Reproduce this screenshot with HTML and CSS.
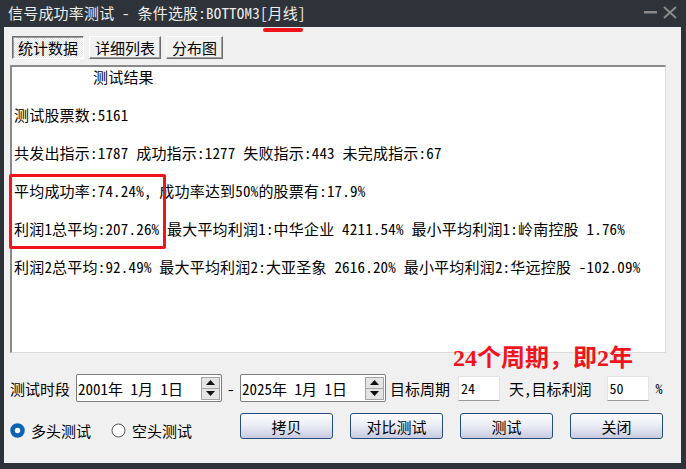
FILE: index.html
```html
<!DOCTYPE html>
<html lang="zh-CN">
<head>
    <meta charset="UTF-8">
    <title>信号成功率测试</title>
    <link rel="stylesheet" href="styles.css">
</head>
<body>
    <div class="window">
        <div class="titlebar">
            <span class="title">信号成功率测试 - 条件选股:BOTTOM3[月线]</span>
            <div class="controls">
                <svg width="33" height="14" viewBox="0 0 33 14">
                    <rect x="0" y="5" width="13" height="2.5" fill="#8a8a8a"/>
                    <path d="M20 1 L32 12 M32 1 L20 12" stroke="#8a8a8a" stroke-width="2"/>
                </svg>
            </div>
        </div>

        <div class="body">
            <span class="title-mark"></span>

            <div class="tabs">
                <div class="tab active">统计数据</div>
                <div class="tab">详细列表</div>
                <div class="tab">分布图</div>
            </div>

            <div class="result">
                <div class="line heading">测试结果</div>
                <div class="line">测试股票数:5161</div>
                <div class="line">共发出指示:1787 成功指示:1277 失败指示:443 未完成指示:67</div>
                <div class="line">平均成功率:74.24%, 成功率达到50%的股票有:17.9%</div>
                <div class="line">利润1总平均:207.26% 最大平均利润1:中华企业 4211.54% 最小平均利润1:岭南控股 1.76%</div>
                <div class="line">利润2总平均:92.49% 最大平均利润2:大亚圣象 2616.20% 最小平均利润2:华远控股 -102.09%</div>
                <span class="highlight"></span>
            </div>

            <div class="params">
                <span class="label">测试时段</span>
                <div class="datebox">
                    <span>2001年 1月 1日</span>
                    <div class="spin">
                        <div class="spin-btn">
                            <svg width="9" height="5" viewBox="0 0 9 5"><path d="M4.5 0 L9 5 L0 5 Z" fill="#111"/></svg>
                        </div>
                        <div class="spin-btn">
                            <svg width="9" height="5" viewBox="0 0 9 5"><path d="M0 0 L9 0 L4.5 5 Z" fill="#111"/></svg>
                        </div>
                    </div>
                </div>
                <span class="dash">-</span>
                <div class="datebox">
                    <span>2025年 1月 1日</span>
                    <div class="spin">
                        <div class="spin-btn">
                            <svg width="9" height="5" viewBox="0 0 9 5"><path d="M4.5 0 L9 5 L0 5 Z" fill="#111"/></svg>
                        </div>
                        <div class="spin-btn">
                            <svg width="9" height="5" viewBox="0 0 9 5"><path d="M0 0 L9 0 L4.5 5 Z" fill="#111"/></svg>
                        </div>
                    </div>
                </div>
                <span class="label after-date">目标周期</span>
                <div class="num">24</div>
                <span class="label after-num">天,目标利润</span>
                <div class="num wide-gap">50</div>
                <span class="pct">%</span>
            </div>

            <div class="actions">
                <div class="radios">
                    <label class="radio">
                        <svg width="15" height="15" viewBox="0 0 15 15"><circle cx="7.5" cy="7.5" r="5" fill="#fff" stroke="#0a63b4" stroke-width="4.5"/></svg>
                        <span>多头测试</span>
                    </label>
                    <label class="radio">
                        <svg width="15" height="15" viewBox="0 0 15 15"><circle cx="7.5" cy="7.5" r="6.5" fill="#fff" stroke="#555" stroke-width="1"/></svg>
                        <span>空头测试</span>
                    </label>
                </div>
                <div class="buttons">
                    <button class="btn">拷贝</button>
                    <button class="btn">对比测试</button>
                    <button class="btn">测试</button>
                    <button class="btn">关闭</button>
                </div>
            </div>

            <div class="note">24个周期，即2年</div>
        </div>
    </div>
</body>
</html>
```

FILE: styles.css
```css
* {
    box-sizing: border-box;
}
body {
    margin: 0;
    font-family: "Noto Sans Mono CJK SC", "Noto Sans CJK SC", monospace;
    font-size: 15px;
    color: #000;
    background-color: #2d3338;
}
.window {
    width: 686px;
    height: 469px;
    background-color: #2d3338;
    padding: 0 5px 6px 4px;
    display: flex;
    flex-direction: column;
}
.titlebar {
    height: 27px;
    display: flex;
    align-items: center;
    justify-content: space-between;
    padding: 0 4px 0 4px;
    color: #ededed;
}
.title {
    line-height: 20px;
    margin-top: -1px;
    letter-spacing: 0.2px;
}
.controls svg {
    display: block;
    margin-top: -2px;
}
.body {
    flex: 1;
    position: relative;
    background-color: #f0f0f0;
    padding: 9px 0 0 6px;
}
.title-mark {
    position: absolute;
    left: 259px;
    top: 1px;
    width: 40px;
    height: 4px;
    border-radius: 2px;
    background-color: #f0141c;
}
.tabs {
    display: flex;
    margin-left: 2px;
    height: 23px;
}
.tab {
    height: 23px;
    line-height: 21px;
    padding: 0 5px;
    margin-right: 5px;
    border: 1px solid;
    border-color: #fff #6d6d6d #6d6d6d #fff;
    box-shadow: inset -1px -1px #a0a0a0;
    background-color: #f0f0f0;
}
.tab.active {
    border-color: #6d6d6d #fff #fff #6d6d6d;
    box-shadow: inset 1px 1px #a0a0a0;
    background: repeating-conic-gradient(#fff 0 25%, #e4e4e4 0 50%) 0 0 / 2px 2px;
}
.result {
    position: relative;
    margin-top: 6px;
    width: 656px;
    height: 288px;
    background-color: #fff;
    border-top: 2px solid #8a8a8a;
    border-left: 2px solid #8a8a8a;
    border-right: 1px solid #dadada;
    border-bottom: 1px solid #dadada;
    padding: 0 0 0 2px;
    letter-spacing: 0.2px;
}
.line {
    line-height: 20px;
    height: 20px;
    margin-bottom: 18px;
    white-space: nowrap;
}
.heading {
    padding-left: 79px;
}
.highlight {
    position: absolute;
    left: -3px;
    top: 107px;
    width: 157px;
    height: 75px;
    border: 3px solid #f0141c;
    border-radius: 2px;
}
.params {
    display: flex;
    align-items: center;
    margin-top: 21px;
    height: 28px;
}
.label {
    white-space: nowrap;
}
.datebox {
    display: flex;
    align-items: center;
    width: 146px;
    height: 28px;
    margin-left: 6px;
    padding-left: 1px;
    background-color: #fff;
    border: 1px solid #7c7c7c;
    border-radius: 2px;
}
.datebox + .dash + .datebox {
    margin-left: 0;
}
.spin {
    margin-left: auto;
    margin-right: 1px;
    width: 19px;
    height: 23px;
    display: flex;
    flex-direction: column;
    border: 1px solid #a5a5a5;
    background-color: #e4e4e4;
}
.spin-btn {
    flex: 1;
    display: flex;
    align-items: center;
    justify-content: center;
}
.spin-btn + .spin-btn {
    border-top: 1px solid #a5a5a5;
}
.dash {
    margin: 0 5px;
    width: 8px;
}
.after-date {
    margin-left: 4px;
}
.num {
    width: 42px;
    height: 25px;
    margin-left: 8px;
    padding: 3px 2px 0;
    font-size: 14px;
    line-height: 16px;
    background-color: #fff;
    border: 1px solid #e3e3e3;
    border-bottom-color: #9a9a9a;
}
.after-num {
    margin-left: 9px;
}
.num.wide-gap {
    margin-left: 15px;
}
.pct {
    margin-left: 7px;
    font-size: 14px;
}
.actions {
    display: flex;
    align-items: flex-start;
    margin-top: 11px;
    padding-right: 18px;
}
.radios {
    display: flex;
    margin-top: 7px;
}
.radio {
    display: flex;
    align-items: center;
    margin-right: 20px;
}
.radio svg {
    margin-right: 6px;
}
.buttons {
    display: flex;
    margin-left: auto;
}
.btn {
    width: 93px;
    height: 26px;
    margin-left: 17px;
    font-family: inherit;
    font-size: 15px;
    color: #000;
    border: 1px solid #274d7c;
    border-radius: 3px;
    background: linear-gradient(#fdfdfe, #eceef6 45%, #c8cbdf);
    padding: 0;
}
.note {
    position: absolute;
    left: 449px;
    top: 319px;
    font-family: "Liberation Serif", "Noto Sans CJK SC", serif;
    font-size: 24px;
    font-weight: bold;
    line-height: 1;
    color: #ee1420;
    white-space: nowrap;
}
```
